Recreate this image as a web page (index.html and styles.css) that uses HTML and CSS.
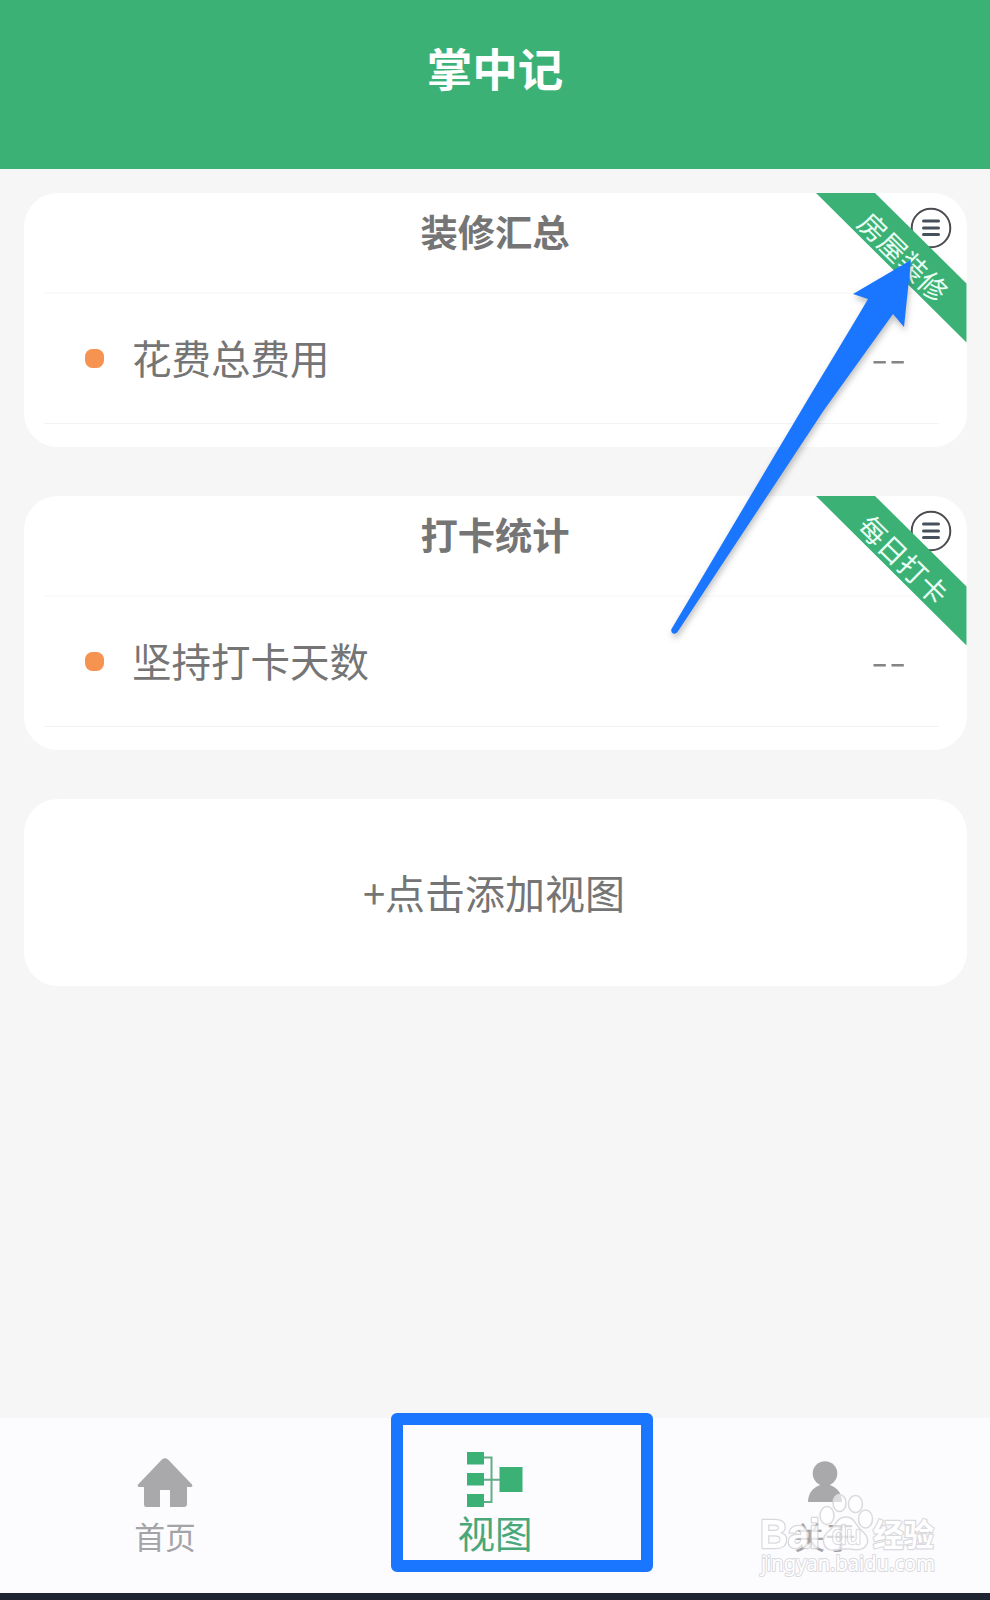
FILE: index.html
```html
<!DOCTYPE html>
<html lang="zh-CN">
<head>
<meta charset="utf-8">
<title>掌中记</title>
<link rel="stylesheet" href="styles.css">
</head>
<body>
<div class="app">
  <header class="header"><h1 class="header-title">掌中记</h1></header>
  <main class="content">
    <section class="card">
      <svg class="menu" viewBox="0 0 42 42"><circle cx="21" cy="21" r="19.3"/><path d="M13.5 14h15M13.5 21h15M13.5 27.5h15"/></svg>
      <div class="ribbon"><span class="ribbon-text">房屋装修</span></div>
      <h2 class="card-title">装修汇总</h2>
      <div class="row"><i class="dot"></i><span class="label">花费总费用</span><span class="value">--</span></div>
    </section>
    <section class="card">
      <svg class="menu" viewBox="0 0 42 42"><circle cx="21" cy="21" r="19.3"/><path d="M13.5 14h15M13.5 21h15M13.5 27.5h15"/></svg>
      <div class="ribbon"><span class="ribbon-text">每日打卡</span></div>
      <h2 class="card-title">打卡统计</h2>
      <div class="row"><i class="dot"></i><span class="label">坚持打卡天数</span><span class="value">--</span></div>
    </section>
    <section class="card add">+点击添加视图</section>
  </main>
  <nav class="tabs">
    <div class="tab">
      <svg class="icon" viewBox="0 0 56 56"><path d="M25 3.500Q28 1 31 3.500L55 28.500Q56 31 54 31H50V48Q50 51 47 51H33V34H23V51H9Q7 51 7 48V31H2Q0 31 1 28.500Z"/></svg>
      <span>首页</span>
    </div>
    <div class="tab active">
      <svg class="icon" viewBox="0 0 56 56"><path d="M0 0h17v12.500H0zM0 21h17v12.500H0zM0 42h17v13H0zM32.500 15H55.500v25H32.500z"/><path class="wire" d="M17 5.500h7.500v44.500H17M17 27.800h16"/></svg>
      <span>视图</span>
    </div>
    <div class="tab">
      <svg class="icon" viewBox="0 0 56 56"><circle cx="28" cy="17.500" r="12.300"/><path d="M11 46C11 36 18 28.500 28 28.500S45 36 45 46Z"/></svg>
      <span>关于</span>
    </div>
  </nav>
  <div class="system-bar"></div>
  <div class="highlight"></div>
  <svg class="overlay" viewBox="0 0 990 1600">
    <path class="arrow" d="M911 260L853 294L868 299Q857 318 814 389L671.500 629Q670.500 632 673 633.500Q675.500 634.500 677.500 632L824 410L893 314L904 327Z"/>
    <g class="watermark">
      <text class="wm-brand" x="760" y="1548" textLength="60" lengthAdjust="spacingAndGlyphs">Bai</text>
      <path d="M846 1517C855 1517 855 1525 861 1530C867 1535 869 1539 867 1544C864 1551 855 1550 850 1549H840C834 1551 826 1551 824 1544C822 1538 825 1534 831 1529C837 1524 837 1517 846 1517Z"/>
      <ellipse cx="839.500" cy="1503" rx="6.500" ry="8.500"/>
      <ellipse cx="855.500" cy="1504" rx="7" ry="8.500"/>
      <ellipse cx="827" cy="1515.500" rx="7" ry="9"/>
      <ellipse cx="865.500" cy="1519" rx="7" ry="9"/>
      <text class="wm-du" x="832" y="1544" textLength="29" lengthAdjust="spacingAndGlyphs">du</text>
      <text class="wm-cn" x="873" y="1546" textLength="61">经验</text>
      <text class="wm-url" x="761" y="1571" textLength="174" lengthAdjust="spacingAndGlyphs">jingyan.baidu.com</text>
    </g>
  </svg>
</div>
</body>
</html>
```
FILE: styles.css
```css
* { box-sizing: border-box; }
body { margin: 0; background: #f6f6f6; font-family: "Noto Sans CJK SC", sans-serif; color: #757575; }
h1, h2 { margin: 0; }
.app { position: relative; width: 990px; height: 1600px; display: flex; flex-direction: column; overflow: hidden; }
.header { height: 169px; padding-top: 34px; background: #3bb176; text-align: center; }
.header-title { font-size: 45.500px; line-height: 66px; font-weight: 700; color: #fff; }
.content { flex: 1; padding: 23.500px 24px 0 23.500px; display: flex; flex-direction: column; gap: 49px; }
.card { position: relative; width: 943px; height: 254px; background: #fff; border-radius: 34px; overflow: hidden; }
.card-title { height: 101px; margin: 0 24px 0 20px; padding: 11px 0 0 4px; border-bottom: 2px solid #fafafa; font-size: 37.300px; line-height: 54px; font-weight: 700; text-align: center; }
.row { height: 130px; margin: 0 28px 0 20px; padding: 0 31px 0 41px; border-bottom: 1px solid #f3f3f3; display: flex; align-items: center; }
.dot { width: 19px; height: 19px; margin-right: 28.500px; border-radius: 7.500px; background: #f79350; }
.label { margin-top: -2px; font-size: 39.500px; line-height: 56px; }
.value { margin: -8px 0 0 auto; font-size: 50px; line-height: 56px; font-weight: 300; letter-spacing: 1.500px; color: #858585; }
.menu { position: absolute; left: 886.500px; top: 14px; width: 42px; height: 42px; fill: none; stroke: #4d4a50; stroke-width: 2; }
.menu path { stroke: #46515b; stroke-width: 3; stroke-linecap: round; }
.ribbon { position: absolute; right: 0; top: 0; width: 151px; height: 150px; background: #3bb176; clip-path: polygon(0 0, 59px 0, 151px 91px, 151px 150px); display: flex; align-items: center; justify-content: center; }
.ribbon-text { font-size: 28px; line-height: 40px; color: #e9fff3; white-space: nowrap; transform: translate(13px, -12px) rotate(44.500deg); }
.add { height: 187px; display: flex; align-items: center; justify-content: center; padding-right: 2px; font-size: 40px; line-height: 56px; }
.tabs { height: 175px; display: grid; grid-template-columns: repeat(3, 1fr); background: #fcfbfe; }
.tab { display: flex; flex-direction: column; align-items: center; padding-top: 38px; font-size: 30.800px; line-height: 44px; color: #a4a3a6; }
.tab span { margin-top: 2px; }
.icon { width: 56px; height: 56px; fill: #a9a8ab; }
.active { padding-top: 34px; font-size: 37.500px; color: #48a87a; }
.active .icon { fill: #3bb176; overflow: visible; }
.wire { fill: none; stroke: #62ae88; stroke-width: 2; }
.system-bar { height: 7px; background: #1f2433; }
.highlight { position: absolute; left: 391px; top: 1413px; width: 262px; height: 159px; border: 12px solid #1a76fe; border-radius: 6px; }
.overlay { position: absolute; left: 0; top: 0; width: 990px; height: 1600px; }
.arrow { fill: #1a76fe; filter: drop-shadow(1px 4px 3px rgba(0, 0, 0, .25)); }
.watermark { fill: rgba(255, 255, 255, .6); stroke: #dadade; stroke-width: 1.500px; font-family: "Liberation Sans", "Noto Sans CJK SC", sans-serif; }
.watermark text { paint-order: stroke; fill: #fff; stroke-width: 2.500px; stroke-linejoin: round; }
.watermark .wm-brand { font-size: 40px; font-weight: 700; opacity: .75; stroke: #ccccd0; }
.watermark .wm-du { font-size: 25px; opacity: .6; stroke: #ccccd0; }
.watermark .wm-cn { font-size: 30.500px; font-weight: 700; }
.watermark .wm-url { font-family: "Noto Sans", sans-serif; font-size: 21px; stroke-width: 2px; }
```
